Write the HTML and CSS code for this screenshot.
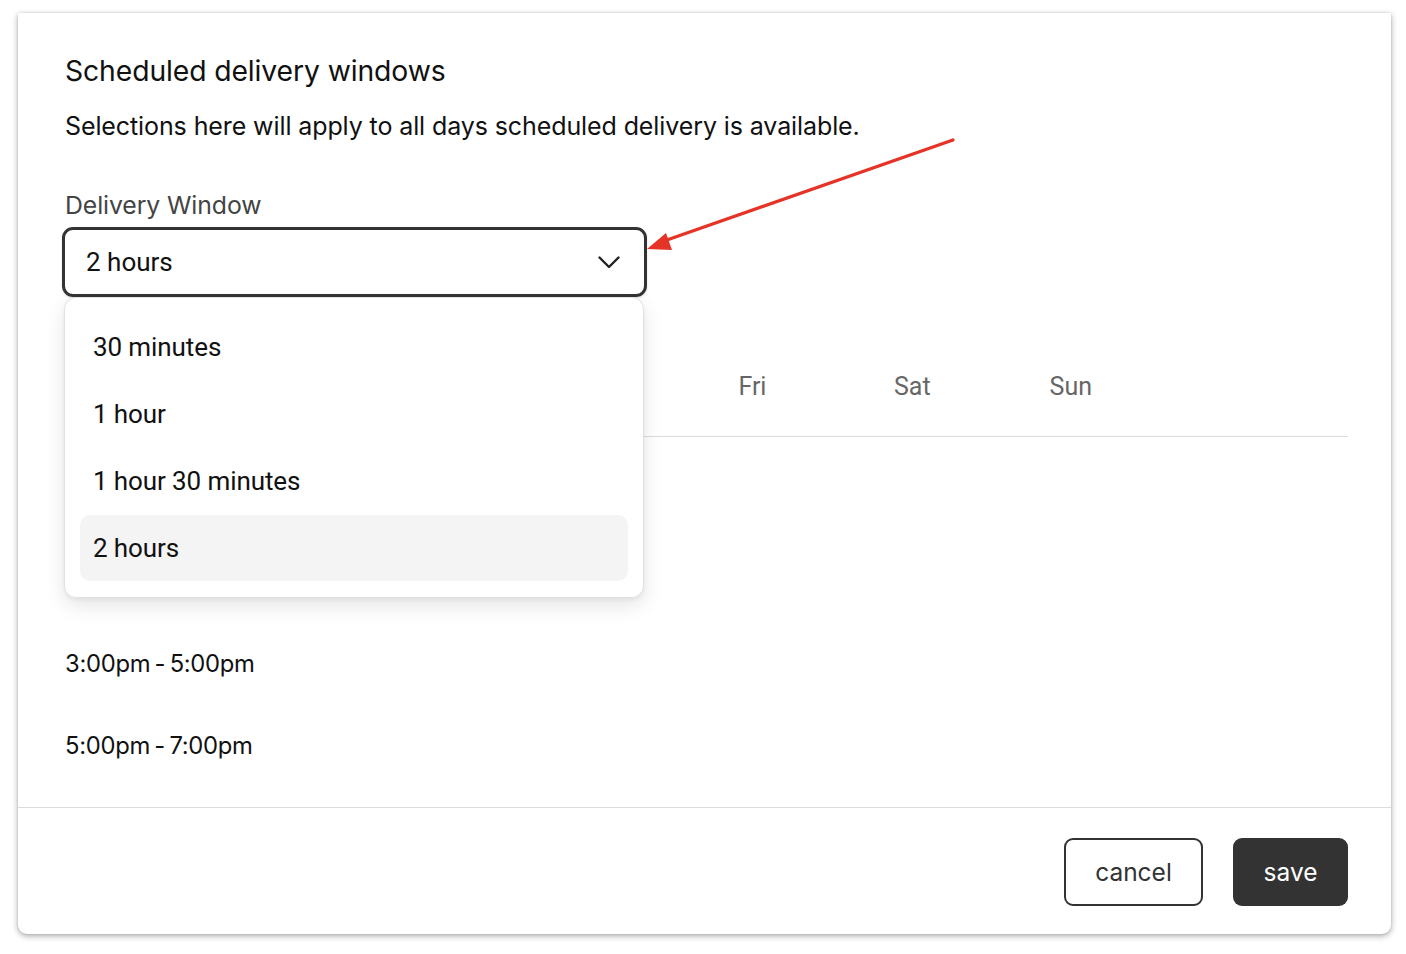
FILE: index.html
```html
<!DOCTYPE html>
<html lang="en">
<head>
<meta charset="utf-8">
<title>Scheduled delivery windows</title>
<link rel="stylesheet" href="styles.css">
</head>
<body>
<div class="dialog">
  <div class="dialog-body">
    <h2 class="title">Scheduled delivery windows</h2>
    <p class="subtitle">Selections here will apply to all days scheduled delivery is available.</p>
    <div class="field">
      <div class="label">Delivery Window</div>
      <div class="select-wrap">
        <div class="select">
          <span class="select-value">2 hours</span>
          <svg class="chevron" width="22" height="13" viewBox="0 0 22 13"><path d="M1.5 1.5 L11 11 L20.5 1.5" fill="none" stroke="#222" stroke-width="2.4" stroke-linecap="round" stroke-linejoin="round"/></svg>
        </div>
        <ul class="menu">
          <li class="menu-item">30 minutes</li>
          <li class="menu-item">1 hour</li>
          <li class="menu-item">1 hour 30 minutes</li>
          <li class="menu-item selected">2 hours</li>
        </ul>
      </div>
    </div>
    <div class="schedule">
      <div class="days">
        <span class="day"></span>
        <span class="day"></span>
        <span class="day"></span>
        <span class="day"></span>
        <span class="day">Fri</span>
        <span class="day">Sat</span>
        <span class="day">Sun</span>
      </div>
      <div class="rows">
        <div class="row"></div>
        <div class="row"></div>
        <div class="row">3:00pm - 5:00pm</div>
        <div class="row">5:00pm - 7:00pm</div>
      </div>
    </div>
  </div>
  <div class="dialog-footer">
    <button class="btn btn-cancel">cancel</button>
    <button class="btn btn-save">save</button>
  </div>
</div>
<svg class="annotation" width="1406" height="954" viewBox="0 0 1406 954">
  <line x1="953" y1="140" x2="664" y2="241" stroke="#e63327" stroke-width="3.2" stroke-linecap="round"/>
  <polygon points="647,249 666,233 672,250" fill="#e63327"/>
</svg>
</body>
</html>
```
FILE: styles.css
```css
html, body {
  margin: 0;
  padding: 0;
  background: #ffffff;
}
body {
  font-family: Inter, "Noto Sans", "Liberation Sans", sans-serif;
  color: #111;
  position: relative;
  width: 1406px;
  height: 954px;
  overflow: hidden;
}
.dialog {
  margin: 13px 0 0 18px;
  width: 1373px;
  height: 921px;
  background: #fff;
  border-radius: 0 0 9px 9px;
  box-shadow: 0 2px 6px rgba(0,0,0,0.34), 0 0 2px rgba(0,0,0,0.14);
  display: flex;
  flex-direction: column;
  box-sizing: border-box;
}
.dialog-body {
  padding: 41px 43px 0 47px;
  flex: 1;
}
.title {
  margin: 0;
  font-size: 28.3px;
  font-weight: 400;
  line-height: 34px;
  letter-spacing: -0.1px;
}
.subtitle {
  margin: 23px 0 0;
  font-size: 25px;
  line-height: 30px;
  letter-spacing: -0.1px;
}
.field {
  margin-top: 49px;
}
.label {
  font-size: 24.8px;
  line-height: 30px;
  color: #444;
  letter-spacing: -0.1px;
}
.select-wrap {
  position: relative;
  margin: 7px 0 0 -3px;
  width: 585px;
}
.select {
  height: 70px;
  box-sizing: border-box;
  border: 3px solid #333;
  border-radius: 11px;
  display: flex;
  align-items: center;
  justify-content: space-between;
  padding: 0 24px 0 21px;
  box-shadow: 0 1px 2px rgba(0,0,0,0.15);
}
.select-value {
  font-family: Roboto, "Liberation Sans", sans-serif;
  font-size: 26px;
  color: #111;
}
.chevron {
  display: block;
}
.menu {
  position: absolute;
  top: 70px;
  left: 2px;
  width: 580px;
  margin: 0;
  padding: 16px 15px;
  box-sizing: border-box;
  list-style: none;
  background: #fff;
  border: 1px solid #e2e2e2;
  border-radius: 12px;
  box-shadow: 0 8px 20px rgba(0,0,0,0.10), 0 2px 4px rgba(0,0,0,0.05);
  z-index: 5;
  display: flex;
  flex-direction: column;
  gap: 1px;
}
.menu-item {
  height: 66px;
  display: flex;
  align-items: center;
  padding-left: 13px;
  border-radius: 10px;
  font-family: Roboto, "Liberation Sans", sans-serif;
  font-size: 26px;
  letter-spacing: -0.1px;
  color: #111;
}
.menu-item.selected {
  background: #f4f4f4;
}
.schedule {
  margin-top: 75px;
}
.days {
  display: grid;
  grid-template-columns: repeat(7, 155.6px);
  height: 30px;
  padding: 0 0 34px 51px;
  border-bottom: 1px solid #dcdcdc;
}
.day {
  font-family: Roboto, "Liberation Sans", sans-serif;
  font-size: 25px;
  line-height: 30px;
  color: #666;
}
.rows {
  padding: 21px 0;
}
.row {
  height: 82px;
  display: flex;
  align-items: center;
  font-size: 23.8px;
  letter-spacing: -0.3px;
  word-spacing: -2px;
  color: #111;
}
.dialog-footer {
  border-top: 1px solid #dcdcdc;
  padding: 30px 43px 28px 47px;
  display: flex;
  justify-content: flex-end;
  gap: 30px;
}
.btn {
  height: 68px;
  box-sizing: border-box;
  border-radius: 9px;
  font-family: Inter, "Noto Sans", "Liberation Sans", sans-serif;
  font-size: 24.5px;
  cursor: pointer;
}
.btn-cancel {
  width: 139px;
  background: #fff;
  border: 2px solid #333;
  color: #333;
}
.btn-save {
  width: 115px;
  background: #333;
  border: none;
  color: #fff;
}
.annotation {
  position: absolute;
  top: 0;
  left: 0;
  pointer-events: none;
  z-index: 10;
}
```
